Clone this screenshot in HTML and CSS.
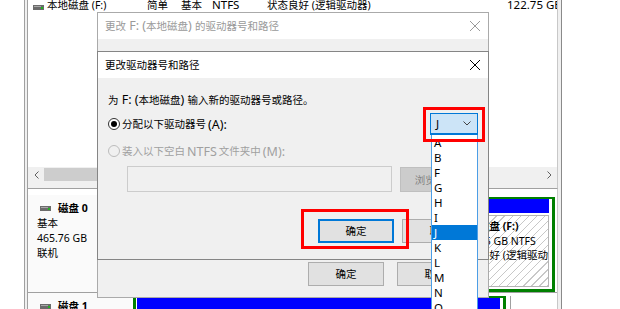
FILE: index.html
```html
<!DOCTYPE html>
<html lang="zh-CN">

<head>
    <meta charset="UTF-8">
    <meta name="viewport" content="width=device-width, initial-scale=1.0">
    <title>磁盘管理 - 更改驱动器号和路径</title>
    <link rel="stylesheet" href="styles.css">
</head>

<body>
    <!-- disk management console behind the dialogs -->
    <div class="mmc">
        <div class="volumes">
            <div class="vol-row">
                <span class="vol-name">
                    <svg class="drive" width="11" height="5" viewBox="0 0 11 5">
                        <rect width="11" height="5" fill="#6b6b6b" />
                        <rect x="1" y="1" width="7" height="1" fill="#a8a8a8" />
                        <rect x="8" y="2" width="2" height="2" fill="#21b321" />
                    </svg>本地磁盘 (F:)
                </span>
                <span>简单</span>
                <span>基本</span>
                <span class="lat">NTFS</span>
                <span>状态良好 (逻辑驱动器)</span>
                <span class="lat">122.75 GB</span>
            </div>
            <div class="hscroll">
                <span class="scroll-btn">
                    <svg width="5" height="8" viewBox="0 0 5 8"><path d="M4.5 0.5L1 4l3.5 3.5" fill="none" stroke="#606060" /></svg>
                </span>
                <span class="thumb"></span>
                <span class="scroll-btn right">
                    <svg width="5" height="8" viewBox="0 0 5 8"><path d="M0.5 0.5L4 4L0.5 7.5" fill="none" stroke="#606060" /></svg>
                </span>
            </div>
        </div>

        <div class="disks">
            <div class="disk">
                <div class="disk-label">
                    <div class="disk-name">
                        <svg class="drive" width="11" height="5" viewBox="0 0 11 5">
                            <rect width="11" height="5" fill="#6b6b6b" />
                            <rect x="1" y="1" width="7" height="1" fill="#a8a8a8" />
                            <rect x="8" y="2" width="2" height="2" fill="#21b321" />
                        </svg>磁盘 0
                    </div>
                    <div>基本</div>
                    <div>465.76 GB</div>
                    <div>联机</div>
                </div>
                <div class="disk-map">
                    <div class="part primary">
                        <div class="part-head"></div>
                        <div class="part-body">
                            <b>(C:)</b>
                            <span>342.01 GB NTFS</span>
                            <span>状态良好 (启动, 主分区)</span>
                        </div>
                    </div>
                    <div class="part extended disk0-ext">
                        <div class="part-head"></div>
                        <div class="part-body logical">
                            <b>本地磁盘 (F:)</b>
                            <span>122.75 GB NTFS</span>
                            <span>状态良好 (逻辑驱动器)</span>
                        </div>
                    </div>
                </div>
            </div>

            <div class="disk">
                <div class="disk-label">
                    <div class="disk-name">
                        <svg class="drive" width="11" height="5" viewBox="0 0 11 5">
                            <rect width="11" height="5" fill="#6b6b6b" />
                            <rect x="1" y="1" width="7" height="1" fill="#a8a8a8" />
                            <rect x="8" y="2" width="2" height="2" fill="#21b321" />
                        </svg>磁盘 1
                    </div>
                    <div>基本</div>
                </div>
                <div class="disk-map disk1-map">
                    <div class="part extended disk1-ext">
                        <div class="part-head"></div>
                        <div class="part-body logical"></div>
                    </div>
                    <div class="part unallocated"></div>
                </div>
            </div>
        </div>
    </div>

    <!-- parent dialog (inactive) -->
    <div class="dialog dialog-outer">
        <div class="titlebar">
            <span>更改<span class="en"> F: (</span>本地磁盘<span class="en">) </span>的驱动器号和路径</span>
            <span class="close">
                <svg width="10" height="10" viewBox="0 0 10 10"><path d="M0 0L10 10M10 0L0 10" stroke="currentColor" /></svg>
            </span>
        </div>
        <div class="dialog-body outer-body">
            <div class="btn-row outer-btns">
                <button class="btn">确定</button>
                <button class="btn">取消</button>
            </div>
        </div>
    </div>

    <!-- child dialog (active) -->
    <div class="dialog dialog-inner">
        <div class="titlebar">
            <span>更改驱动器号和路径</span>
            <span class="close active">
                <svg width="10" height="10" viewBox="0 0 10 10"><path d="M0 0L10 10M10 0L0 10" stroke="currentColor" /></svg>
            </span>
        </div>
        <div class="dialog-body inner-body">
            <div class="prompt">为<span class="en"> F: (</span>本地磁盘<span class="en">) </span>输入新的驱动器号或路径。</div>
            <div class="opt-row">
                <label class="option">
                    <span class="radio checked"></span>分配以下驱动器号<span class="en">(A):</span>
                </label>
                <div class="combo">
                    <span>J</span>
                    <svg width="8" height="5" viewBox="0 0 8 5"><path d="M0.5 0.5L4 4L7.5 0.5" fill="none" stroke="#444" /></svg>
                    <ul class="droplist">
                        <li>A</li>
                        <li>B</li>
                        <li>F</li>
                        <li>G</li>
                        <li>H</li>
                        <li>I</li>
                        <li class="sel">J</li>
                        <li>K</li>
                        <li>L</li>
                        <li>M</li>
                        <li>N</li>
                        <li>O</li>
                    </ul>
                </div>
            </div>
            <label class="option disabled">
                <span class="radio off"></span>装入以下空白<span class="en"> NTFS </span>文件夹中<span class="en">(M):</span>
            </label>
            <div class="path-row">
                <div class="path-field"></div>
                <button class="btn btn-disabled">浏览<span class="en">(B)...</span></button>
            </div>
            <div class="btn-row inner-btns">
                <button class="btn btn-default">确定</button>
                <button class="btn">取消</button>
            </div>
            <div class="mark mark-combo"></div>
            <div class="mark mark-ok"></div>
        </div>
    </div>
</body>

</html>
```

FILE: styles.css
```css
html,
body {
    margin: 0;
    height: 309px;
    overflow: hidden;
}

body {
    position: relative;
    background: #fff;
    color: #000;
    font-family: "Noto Sans", "Noto Sans CJK SC", sans-serif;
    font-size: 10.5px;
    line-height: 15px;
}

/* console window */
.mmc {
    width: 538px;
    height: 309px;
    margin-left: 24px;
    box-sizing: border-box;
    padding: 0 3px 0 2px;
    border-left: 1px solid #a0a0a0;
    border-right: 1px solid #8a8a8a;
    background: #f0f0f0;
    display: flex;
    flex-direction: column;
}

.volumes {
    height: 188px;
    flex-shrink: 0;
    background: #fff;
    border-left: 1px solid #a0a0a0;
    border-right: 1px solid #c8c8c8;
    display: flex;
    flex-direction: column;
    overflow: hidden;
}

.vol-row {
    display: grid;
    grid-template-columns: 114px 34px 31px 55px 240px 1fr;
    height: 18px;
    margin-top: -4px;
    padding-left: 5px;
    line-height: 18px;
    white-space: nowrap;
    overflow: hidden;
}

.vol-row .lat {
    font-size: 11.5px;
}

.vol-name {
    display: flex;
    align-items: center;
    gap: 3px;
}

.vol-name .drive {
    margin-top: 5px;
}

.hscroll {
    margin-top: auto;
    height: 21px;
    box-sizing: border-box;
    padding-top: 1px;
    background: #f0f0f0;
    display: flex;
    align-items: flex-start;
}

.scroll-btn {
    width: 16px;
    height: 13px;
    display: flex;
    align-items: center;
    justify-content: center;
}

.scroll-btn.right {
    margin-left: auto;
}

.thumb {
    width: 270px;
    height: 13px;
    background: #cdcdcd;
}

.disks {
    flex: 1;
    background: #fff;
    border-left: 1px solid #a0a0a0;
    border-right: 1px solid #c8c8c8;
    border-top: 1px solid #a0a0a0;
    padding-top: 6px;
}

.disk {
    display: grid;
    grid-template-columns: 103px 1fr;
    height: 98px;
    box-sizing: border-box;
    border-bottom: 1px solid #a0a0a0;
}

.disk-label {
    padding: 6px 0 0 9px;
    background: #fafafa;
    white-space: nowrap;
}

.disk-name {
    display: flex;
    align-items: center;
    gap: 7px;
    font-weight: bold;
}

.disk-name .drive {
    margin-left: 3px;
}

.disk-map {
    display: flex;
    gap: 3px;
    padding: 2px 2px 0 2px;
    min-width: 0;
}

.disk1-map {
    padding-top: 3px;
    gap: 4px;
}

.part {
    display: flex;
    flex-direction: column;
    box-sizing: border-box;
    min-width: 0;
}

.primary {
    flex: 1;
    border: 1px solid #a0a0a0;
}

.extended {
    border: 3px solid #008000;
    border-top-width: 2px;
    padding: 0 3px 2px 1px;
    background: #fff;
}

.disk0-ext {
    width: 103px;
    flex-shrink: 0;
}

.disk1-ext {
    width: 373px;
    flex-shrink: 0;
}

.unallocated {
    flex: 1;
    border-left: 1px solid #a0a0a0;
    background: #fff;
}

.part-head {
    height: 14px;
    flex-shrink: 0;
    background: #0000ff;
}

.part-body {
    flex: 1;
    display: flex;
    flex-direction: column;
    padding: 3px 0 0 1px;
    line-height: 14.5px;
    white-space: nowrap;
    overflow: hidden;
}

.logical {
    margin-top: 2px;
    border: 1px solid #b4b4b4;
    background: repeating-linear-gradient(135deg, #fff 0 4.7px, #c8c8c8 4.7px 5.7px);
}

/* dialogs */
.dialog {
    position: absolute;
    left: 97px;
    width: 392px;
    box-sizing: border-box;
    background: #f0f0f0;
    display: flex;
    flex-direction: column;
    white-space: nowrap;
}

/* latin runs look larger in the dialog font */
.en {
    font-size: 12.5px;
}

.dialog-outer {
    top: 12px;
    height: 286px;
    border: 1px solid #aaaaaa;
    color: #000;
}

.dialog-inner {
    top: 51px;
    height: 209px;
    border: 1px solid #858585;
}

.titlebar {
    height: 26px;
    flex-shrink: 0;
    padding-left: 7px;
    background: #fff;
    display: flex;
    align-items: center;
    justify-content: space-between;
}

.dialog-outer .titlebar {
    color: #9a9a9a;
}

.close {
    width: 26px;
    height: 100%;
    display: flex;
    align-items: center;
    justify-content: center;
    color: #9a9a9a;
}

.close.active {
    color: #000;
}

.dialog-body {
    flex: 1;
    position: relative;
    display: flex;
    flex-direction: column;
}

.outer-body {
    justify-content: flex-end;
    padding: 0 15px 11px;
}

.inner-body {
    padding: 15px 10px 0;
}

.btn-row {
    display: flex;
    justify-content: flex-end;
}

.outer-btns {
    gap: 13px;
}

.inner-btns {
    gap: 8px;
    margin-top: 27px;
}

.btn {
    width: 76px;
    height: 24px;
    box-sizing: border-box;
    padding: 0;
    border: 1px solid #adadad;
    background: #e1e1e1;
    color: #000;
    font: inherit;
    white-space: nowrap;
}

.btn-default {
    border: 2px solid #0078d7;
}

.btn-disabled {
    background: #cccccc;
    border-color: #bfbfbf;
    color: #838383;
}

.prompt {
    height: 14px;
    line-height: 14px;
}

.opt-row {
    height: 22px;
    margin-top: 6px;
    display: flex;
    align-items: center;
    justify-content: space-between;
}

.option {
    display: flex;
    align-items: center;
    gap: 2px;
    height: 14px;
}

.option.disabled {
    margin-top: 9px;
    color: #a0a0a0;
}

.radio {
    width: 12px;
    height: 12px;
    box-sizing: border-box;
    border: 1px solid #333;
    border-radius: 50%;
    background: #fff;
    display: flex;
    align-items: center;
    justify-content: center;
}

.radio.checked::after {
    content: "";
    width: 6px;
    height: 6px;
    border-radius: 50%;
    background: #000;
}

.radio.off {
    border-color: #bcbcbc;
    background: #f0f0f0;
}

.combo {
    position: relative;
    width: 48px;
    height: 22px;
    box-sizing: border-box;
    padding: 0 6px 0 5px;
    border: 1px solid #0078d7;
    border-bottom-width: 2px;
    background: #cce4f7;
    font-size: 11.5px;
    display: flex;
    align-items: center;
    justify-content: space-between;
}

.droplist {
    position: absolute;
    top: calc(100% + 2px);
    left: 0;
    width: 47px;
    box-sizing: border-box;
    margin: 0;
    padding: 0;
    list-style: none;
    background: #fff;
    border: 1px solid #4c9ee6;
    border-top: 0;
    z-index: 2;
}

.droplist li {
    height: 15px;
    line-height: 15px;
    padding-left: 2px;
}

.droplist .sel {
    background: #0078d7;
    color: #fff;
}

.path-row {
    display: flex;
    gap: 8px;
    margin-top: 8px;
    height: 26px;
}

.path-field {
    width: 265px;
    margin-left: 19px;
    box-sizing: border-box;
    border: 1px solid #cccccc;
    background: #f0f0f0;
}

.path-row .btn {
    height: 25px;
    margin-top: 1px;
}

/* red annotation boxes */
.mark {
    position: absolute;
    box-sizing: border-box;
    border: 3px solid #ff0000;
    z-index: 3;
}

.mark-combo {
    left: 325px;
    top: 29px;
    width: 62px;
    height: 35px;
}

.mark-ok {
    left: 203px;
    top: 131px;
    width: 108px;
    height: 40px;
}
```
